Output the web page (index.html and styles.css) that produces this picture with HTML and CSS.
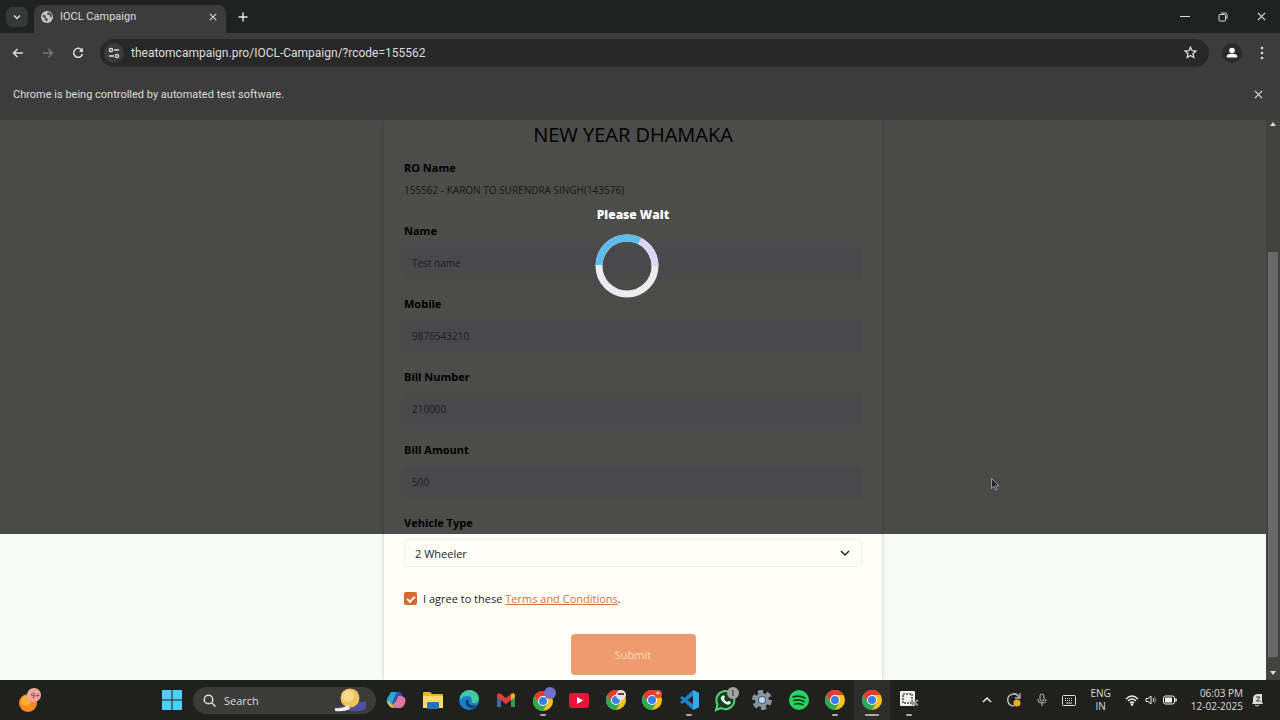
FILE: index.html
```
<!DOCTYPE html>
<html lang="en">
<head>
    <meta charset="utf-8">
    <title>IOCL Campaign</title>
    <meta name="viewport" content="width=device-width, initial-scale=1">
    <link rel="stylesheet" href="styles.css">
</head>
<body>
    <svg class="defs" width="0" height="0" aria-hidden="true">
        <symbol id="chrome" viewBox="0 0 20 20">
            <circle cx="10" cy="10" r="10" fill="#fbc116"/>
            <path d="M1.3 5A10 10 0 0 1 18.7 5H10L5.7 12.5z" fill="#e33b2e"/>
            <path d="M1.3 5A10 10 0 0 0 10 20l4.3-7.5H5.7z" fill="#2da94f"/>
            <circle cx="10" cy="10" r="5" fill="#fff"/>
            <circle cx="10" cy="10" r="4" fill="#3a7de8"/>
        </symbol>
        <symbol id="close" viewBox="0 0 10 10">
            <path d="M1 1l8 8M9 1l-8 8" fill="none" stroke="currentColor" stroke-width="1.3"/>
        </symbol>
    </svg>

    <header>
        <div class="tab-strip">
            <button class="tab-search" aria-label="Search tabs"><svg width="10" height="10" viewBox="0 0 10 10"><path d="M2 3.5l3 3 3-3" fill="none" stroke="#ddd" stroke-width="1.4"/></svg></button>
            <div class="tab">
                <svg width="12" height="12" viewBox="0 0 12 12"><circle cx="6" cy="6" r="6" fill="#c4c6c7"/><path d="M2 3.5l2.5 1L5 7l2 1-1 2.5-2-1.500L3.500 7 1.500 5.500zM6.500 1.500L6 3.500l2.500.5L9.500 6l1.500.5L10.500 3 8.500 1.500z" fill="#4a4c4d"/></svg>
                <span>IOCL Campaign</span>
                <button aria-label="Close tab"><svg width="8" height="8"><use href="#close"/></svg></button>
            </div>
            <button class="new-tab" aria-label="New tab"><svg width="10" height="10" viewBox="0 0 10 10"><path d="M5 .5v9M.5 5h9" stroke="#e8e8e8" stroke-width="1.4"/></svg></button>
            <div class="window-buttons">
                <button aria-label="Minimize"><svg width="10" height="10" viewBox="0 0 10 10"><path d="M0 4.500h10" stroke="#ddd"/></svg></button>
                <button aria-label="Restore"><svg width="10" height="10" viewBox="0 0 10 10" fill="none" stroke="#ddd"><rect x="1" y="2.500" width="6.500" height="6.500" rx="1"/><path d="M3 1h4.500Q9 1 9 2.500V7"/></svg></button>
                <button aria-label="Close window"><svg width="9" height="9"><use href="#close"/></svg></button>
            </div>
        </div>
        <div class="toolbar">
            <button aria-label="Back"><svg width="12" height="12" viewBox="0 0 12 12"><path d="M11 6H2M5.500 2L1.500 6l4 4" fill="none" stroke="#ddd" stroke-width="1.500"/></svg></button>
            <button aria-label="Forward"><svg width="12" height="12" viewBox="0 0 12 12"><path d="M1 6h9M6.500 2l4 4-4 4" fill="none" stroke="#777" stroke-width="1.500"/></svg></button>
            <button aria-label="Reload"><svg width="12" height="12" viewBox="0 0 12 12"><path d="M10 3.500A4.500 4.500 0 1 0 10.500 7" fill="none" stroke="#ddd" stroke-width="1.500"/><path d="M11 .8V5H6.800z" fill="#ddd"/></svg></button>
            <div class="address">
                <button class="site-info" aria-label="Site information"><svg width="12" height="12" viewBox="0 0 12 12" fill="none" stroke="#ddd" stroke-width="1.400"><circle cx="3" cy="3" r="1.600"/><path d="M6 3h5M1 9h5"/><circle cx="9" cy="9" r="1.600"/></svg></button>
                <input type="text" aria-label="Address" value="theatomcampaign.pro/IOCL-Campaign/?rcode=155562">
                <button aria-label="Bookmark"><svg width="13" height="13" viewBox="0 0 13 13"><path d="M6.500 1.200l1.600 3.500 3.800.4L9 7.700l.8 3.800-3.300-2-3.300 2L4 7.700 1.100 5.100l3.800-.4z" fill="none" stroke="#ddd" stroke-width="1.300"/></svg></button>
            </div>
            <button class="profile" aria-label="Profile"><svg width="20" height="20" viewBox="0 0 20 20" fill="#fff"><circle cx="10" cy="10" r="10" fill="#2a2a2a"/><circle cx="10" cy="7.500" r="2.800"/><path d="M4.800 14.500V13q.5-2.200 5.200-2.200t5.200 2.200v1.500z"/></svg></button>
            <button class="menu" aria-label="Menu"><svg width="4" height="14" viewBox="0 0 4 14" fill="#ddd"><circle cx="2" cy="2" r="1.300"/><circle cx="2" cy="7" r="1.300"/><circle cx="2" cy="12" r="1.300"/></svg></button>
        </div>
        <div class="infobar">
            <span>Chrome is being controlled by automated test software.</span>
            <button aria-label="Dismiss"><svg width="9" height="9"><use href="#close"/></svg></button>
        </div>
    </header>

    <div class="viewport">
        <main>
            <form class="card">
                <h1>NEW YEAR DHAMAKA</h1>
                <div class="ro">
                    <strong>RO Name</strong>
                    <p>155562 - KARON TO SURENDRA SINGH(143576)</p>
                </div>
                <div class="field">
                    <label for="name">Name</label>
                    <input type="text" id="name" name="name" value="Test name">
                </div>
                <div class="field">
                    <label for="mobile">Mobile</label>
                    <input type="text" id="mobile" name="mobile" value="9876543210">
                </div>
                <div class="field">
                    <label for="bill_number">Bill Number</label>
                    <input type="text" id="bill_number" name="bill_number" value="210000">
                </div>
                <div class="field">
                    <label for="bill_amount">Bill Amount</label>
                    <input type="text" id="bill_amount" name="bill_amount" value="500">
                </div>
                <div class="field">
                    <label for="vehicle">Vehicle Type</label>
                    <div class="select">
                        <select id="vehicle" name="vehicle">
                            <option>2 Wheeler</option>
                        </select>
                        <svg width="10" height="10" viewBox="0 0 10 10"><path d="M1 3l4 4 4-4" fill="none" stroke="#222" stroke-width="1.500"/></svg>
                    </div>
                </div>
                <div class="agree">
                    <input type="checkbox" id="agree" name="agree" checked>
                    <label for="agree">I agree to these <a href="#terms">Terms and Conditions</a>.</label>
                </div>
                <button class="submit" type="submit">Submit</button>
            </form>
        </main>
        <div class="overlay">
            <p>Please Wait</p>
            <svg class="loader" width="64" height="64" viewBox="0 0 64 64" fill="none" stroke-width="7">
                <circle cx="32" cy="32" r="28" stroke="#ececf0"/>
                <path d="M44.700 7A28 28 0 0 1 60 32" stroke="#dcd6f6"/>
                <path d="M4 31A28 28 0 0 1 44.700 7" stroke="#5cbcec"/>
            </svg>
        </div>
        <div class="scrollbar">
            <svg width="6" height="4" viewBox="0 0 6 4"><path d="M0 4l3-4 3 4z" fill="#ddd"/></svg>
            <div class="track"><div class="thumb"></div></div>
            <svg width="6" height="4" viewBox="0 0 6 4"><path d="M0 0l3 4 3-4z" fill="#ddd"/></svg>
        </div>
        <svg class="pointer" width="9" height="14" viewBox="0 0 9 14"><path d="M.5.500v10l2.400-2.200L4.500 12l1.600-.7-1.600-3.500h3.400z" fill="#20262b" stroke="#9fb2bd" stroke-width=".8"/></svg>
    </div>

    <footer>
        <button class="widgets" aria-label="Widgets">
            <svg width="24" height="26" viewBox="0 0 24 26"><circle cx="10" cy="16" r="9" fill="#f58a1f"/><circle cx="8" cy="14" r="5" fill="#fbae35"/><circle cx="16" cy="8" r="7" fill="#f0a6a0"/></svg>
            <span>9+</span>
        </button>
        <button class="start" aria-label="Start"><svg width="20" height="20" viewBox="0 0 20 20" fill="#4fcdf5"><path d="M0 0h9.500v9.500H0zM10.500 0H20v9.500h-9.500zM0 10.500h9.500V20H0zM10.500 10.500H20V20h-9.500z"/></svg></button>
        <label class="search">
            <svg width="13" height="13" viewBox="0 0 13 13" fill="none" stroke="#ddd" stroke-width="1.500"><circle cx="5.500" cy="5.500" r="4.300"/><path d="M8.700 8.700L12.500 12.500"/></svg>
            <input type="text" placeholder="Search" aria-label="Search">
            <svg width="34" height="24" viewBox="0 0 34 24"><path d="M1 20l13-3 18-4v7q-4 4-14 3z" fill="#5050a5"/><circle cx="16" cy="10" r="9.500" fill="#f0c45b"/><circle cx="14" cy="8" r="6" fill="#f8d987"/><path d="M1 20q8 1 13-3l2 4q-6 3-15 2z" fill="#f2edf2"/></svg>
        </label>
        <nav class="apps">
            <button aria-label="Copilot"><svg width="20" height="20" viewBox="0 0 20 20"><path d="M5 2h7l-5 13H3Q0 14 1 9z" fill="#28a8cf"/><path d="M12 2q4 0 5 5h-6L9 15l-4 2 5-14z" fill="#364fb4"/><path d="M15 6q6 1 4 7-2 6-8 5H7l5-12z" fill="#db78a8"/><path d="M1 10q1 7 6 8l3-7-3 4z" fill="#dfba45"/></svg></button>
            <button aria-label="File Explorer"><svg width="20" height="20" viewBox="0 0 20 20"><path d="M0 3q0-1 1-1h6l2 2h10q1 0 1 1v13H0z" fill="#e6b634"/><path d="M0 6h20v12H0z" fill="#ffdc67"/><path d="M4 13q0-1 1-1h10q1 0 1 1v6H4z" fill="#2372bb"/></svg></button>
            <button aria-label="Edge"><svg width="20" height="20" viewBox="0 0 20 20"><circle cx="10" cy="10" r="10" fill="#1680ce"/><path d="M1 7Q4 0 11 0q8 1 9 8 0 6-6 5-3-1-1-3 0-4-5-4-4 0-7 4z" fill="#43c9a0"/><path d="M7 10q-2 6 5 8 4 0 6-3-3 1-6 0-4-1-2-5z" fill="#16385e"/></svg></button>
            <button aria-label="Gmail"><svg width="18" height="14" viewBox="0 0 18 14"><path d="M0 2v12h4V5z" fill="#4567a6"/><path d="M14 5v9h4V2z" fill="#3a9850"/><path d="M0 2q1-3 4-1l5 4 5-4q3-2 4 1v2l-9 7-9-7z" fill="#da4037"/><path d="M14 1q3-2 4 1v2l-4 3z" fill="#e8b433"/></svg></button>
            <button class="open" aria-label="Chrome, profile 1"><svg width="26" height="26" viewBox="0 0 26 26"><use href="#chrome" x="3" y="4" width="20" height="20"/><circle cx="20" cy="6" r="6" fill="#7170cb"/></svg></button>
            <button aria-label="YouTube"><svg width="20" height="15" viewBox="0 0 20 15"><rect width="20" height="15" rx="3" fill="#ed1237"/><path d="M8 4l6 3.500L8 11z" fill="#fff"/></svg></button>
            <button aria-label="Chrome, profile 2"><svg width="22" height="22" viewBox="0 0 22 22"><use href="#chrome" x="1" y="1" width="20" height="20"/><circle cx="16" cy="6" r="5" fill="#e8e2d8"/><path d="M13 5h6" stroke="#52483f" stroke-width="2"/></svg></button>
            <button aria-label="Chrome, profile 3"><svg width="22" height="22" viewBox="0 0 22 22"><use href="#chrome" x="1" y="1" width="20" height="20"/><circle cx="17" cy="5" r="4" fill="#d94c33"/><circle cx="17" cy="4" r="1.500" fill="#f2c6a0"/></svg></button>
            <button class="open" aria-label="Visual Studio Code"><svg width="20" height="20" viewBox="0 0 20 20"><path d="M14 0l6 3v14l-6 3L1 8l2-2 11 8V6L3 14l-2-2z" fill="#1b80c4"/><path d="M14 0l6 3v14l-6 3z" fill="#37a7eb"/></svg></button>
            <button aria-label="WhatsApp"><svg width="26" height="26" viewBox="0 0 26 26"><path d="M3 23l1.500-5.500A9 9 0 1 1 8 21z" fill="#173d27" stroke="#55d27b" stroke-width="2"/><path d="M9 9q2-2 3 1l-1 2q1 2 3 3l2-1q3 1 1 3-3 2-7-2t-1-6z" fill="#e4f7e8"/><circle cx="20" cy="6" r="6" fill="#a3a3a0"/><path d="M19 4l1-1v6" stroke="#333" fill="none"/></svg></button>
            <button aria-label="Settings"><svg width="20" height="20" viewBox="0 0 20 20"><circle cx="10" cy="10" r="8" fill="none" stroke="#8c949c" stroke-width="4" stroke-dasharray="5 3.380"/><circle cx="10" cy="10" r="5.500" fill="#46617c" stroke="#8c949c" stroke-width="3"/><circle cx="10" cy="10" r="3" fill="#bddaf1"/></svg></button>
            <button aria-label="Spotify"><svg width="20" height="20" viewBox="0 0 20 20"><circle cx="10" cy="10" r="10" fill="#24d561"/><path d="M4 7q6-2 12 1M5 10.500q5-1.500 10 1M6 14q4-1 8 .8" fill="none" stroke="#123b20" stroke-width="1.700" stroke-linecap="round"/></svg></button>
            <button class="open" aria-label="Chrome"><svg width="20" height="20"><use href="#chrome"/></svg></button>
            <button class="open active" aria-label="Chrome, IOCL Campaign"><svg width="20" height="20"><use href="#chrome"/></svg></button>
            <button class="open" aria-label="Snipping Tool"><svg width="20" height="20" viewBox="0 0 20 20"><rect x="1" y="1" width="15" height="15" rx="1" fill="#f0eded"/><rect x="4" y="4" width="9" height="9" fill="none" stroke="#58484b" stroke-width="1.500" stroke-dasharray="2 1"/><path d="M12 12l7 3M13 15l6-5" stroke="#8b949b" stroke-width="2"/></svg></button>
        </nav>
        <div class="tray">
            <button aria-label="Hidden icons"><svg width="10" height="10" viewBox="0 0 10 10"><path d="M1 7l4-4 4 4" fill="none" stroke="#eee" stroke-width="1.500"/></svg></button>
            <button aria-label="Updates"><svg width="16" height="16" viewBox="0 0 16 16"><path d="M13 5A6 6 0 1 0 8 14" fill="none" stroke="#bbb" stroke-width="1.500"/><path d="M14 1v5H9" fill="none" stroke="#bbb" stroke-width="1.300"/><circle cx="11" cy="11" r="3.500" fill="#efaf25"/></svg></button>
            <button aria-label="Microphone"><svg width="12" height="14" viewBox="0 0 12 14" fill="none" stroke="#bbb"><rect x="4" y="1" width="4" height="7" rx="2"/><path d="M2 6v1q0 3 4 3t4-3V6M6 10v3"/></svg></button>
            <button aria-label="Touch keyboard"><svg width="14" height="11" viewBox="0 0 14 11" fill="none" stroke="#ddd"><rect x=".5" y=".5" width="13" height="10" rx="1"/><path d="M3 3.500h8M3 5.500h8" stroke-dasharray="1 1"/><path d="M4 8h6"/></svg></button>
            <button class="language">ENG<br>IN</button>
            <button class="status" aria-label="Network, volume and battery">
                <svg width="14" height="12" viewBox="0 0 14 12" fill="none" stroke="#eee" stroke-width="1.300"><path d="M1 5q6-6 12 0M3 7q4-4 8 0M5 9q2-2 4 0"/><circle cx="7" cy="10.500" r=".7" fill="#eee"/></svg>
                <svg width="12" height="12" viewBox="0 0 12 12" fill="none" stroke="#eee"><path d="M1 4.500h2L6 2v8L3 7.500H1z"/><path d="M8 4q2 2 0 4" /><path d="M9.500 2.500q3 3.500 0 7" stroke="#777"/></svg>
                <svg width="14" height="10" viewBox="0 0 14 10"><rect x=".5" y="1" width="11" height="8" rx="2" fill="none" stroke="#eee"/><rect x="2" y="2.500" width="7" height="5" fill="#eee"/><path d="M13 3.500v3" stroke="#eee" stroke-width="1.500"/></svg>
            </button>
            <button class="clock">06:03 PM<br>12-02-2025</button>
            <button aria-label="Notifications"><svg width="13" height="14" viewBox="0 0 13 14"><path d="M2 9V5q1-4 5-4h4v8l1 2H1z" fill="#ddd"/><path d="M4 12q2 2 4 0" stroke="#ddd" fill="none"/><path d="M5 4h4L5.500 8h4" stroke="#333" fill="none"/></svg></button>
        </div>
    </footer>
</body>
</html>
```

FILE: styles.css
```
* {
    box-sizing: border-box;
}
body {
    margin: 0;
    height: 100vh;
    display: flex;
    flex-direction: column;
    overflow: hidden;
    font-family: "Open Sans", "Noto Sans", sans-serif;
    font-size: 11px;
    color: #ddd;
    background-color: #1f2221;
}
button, input, select {
    font: inherit;
    color: inherit;
    background: none;
    border: 0;
    padding: 0;
    margin: 0;
}
button {
    display: flex;
    align-items: center;
    justify-content: center;
}
svg {
    display: block;
    flex: none;
}
.defs {
    position: absolute;
}
h1, p {
    margin: 0;
}

/* browser bars */
header {
    font-family: Roboto, "Noto Sans", sans-serif;
}
.tab-strip {
    display: flex;
    align-items: center;
    height: 33px;
    padding: 0 0 0 6px;
}
.tab-search {
    width: 22px;
    height: 20px;
    border-radius: 6px;
    background-color: #373838;
}
.tab {
    display: flex;
    align-items: center;
    align-self: flex-end;
    gap: 7px;
    width: 192px;
    height: 28px;
    margin-left: 6px;
    padding: 0 9px 5px 7px;
    border-radius: 8px 8px 0 0;
    background-color: #3c3c3c;
}
.tab span {
    flex: 1;
}
.new-tab {
    width: 34px;
    height: 28px;
}
.window-buttons {
    display: flex;
    margin-left: auto;
}
.window-buttons button {
    width: 38px;
    height: 30px;
}
.toolbar {
    display: flex;
    align-items: center;
    height: 39px;
    padding: 0 3px;
    background-color: #3c3c3c;
}
.toolbar > button {
    width: 30px;
    height: 28px;
}
.address {
    flex: 1;
    display: flex;
    align-items: center;
    gap: 7px;
    height: 28px;
    margin: 0 8px 0 7px;
    padding: 0 12px 0 4px;
    border-radius: 14px;
    background-color: #282828;
}
.address input {
    flex: 1;
    font-size: 12px;
}
.site-info {
    width: 20px;
    height: 20px;
    border-radius: 50%;
    background-color: #3a3a3a;
}
.infobar {
    display: flex;
    align-items: center;
    justify-content: space-between;
    height: 48px;
    padding: 0 17px 3px 13px;
    background-color: #3c3c3c;
}

/* page */
.viewport {
    flex: 1;
    min-height: 0;
    display: flex;
    position: relative;
    background-color: #f7fbf6;
}
main {
    flex: 1;
    overflow: hidden;
    color: #212529;
}
.card {
    max-width: 498px;
    min-height: 100%;
    margin: 0 auto;
    padding: 0 20px 5px;
    background-color: #fffff8;
    box-shadow: 0 0 4px rgba(0, 0, 0, 0.2);
}
h1 {
    font-size: 20px;
    font-weight: 500;
    line-height: 30px;
    text-align: center;
    color: #000;
}
.ro {
    margin: 9px 0 23px;
    line-height: 17px;
}
.ro strong {
    display: block;
    margin-bottom: 6px;
    color: #000;
}
.ro p {
    font-size: 10px;
    color: #555;
}
.field {
    margin-bottom: 16px;
}
.field label {
    display: block;
    margin-bottom: 8px;
    line-height: 17px;
    font-weight: bold;
    color: #000;
}
.field input {
    display: block;
    width: 100%;
    height: 32px;
    padding: 0 8px;
    border-radius: 4px;
    background-color: #f6f6fa;
    font-size: 10px;
    color: #666;
}
.select {
    display: grid;
    align-items: center;
    border: 1px solid #f0f0ee;
    border-radius: 4px;
}
.select select, .select svg {
    grid-area: 1 / 1;
}
.select select {
    appearance: none;
    height: 26px;
    padding: 0 10px;
}
.select svg {
    justify-self: end;
    margin-right: 11px;
    pointer-events: none;
}
.agree {
    display: flex;
    align-items: center;
    gap: 6px;
    height: 18px;
    margin: 22px 0 27px;
}
.agree input {
    appearance: none;
    width: 13px;
    height: 13px;
    border-radius: 2px;
    background-color: #d9682c;
    display: grid;
    place-items: center;
}
.agree input:checked::before {
    content: "";
    width: 6px;
    height: 3px;
    border: solid #fff;
    border-width: 0 0 2px 2px;
    transform: rotate(-45deg);
}
.agree a {
    color: #db7135;
}
.submit {
    width: 125px;
    height: 41px;
    margin: 0 auto;
    border-radius: 4px;
    background-color: #ee9b70;
    color: #fbd9b8;
}
.overlay {
    position: absolute;
    top: 0;
    left: 0;
    right: 14px;
    height: 74%;
    padding-top: 86px;
    display: flex;
    flex-direction: column;
    align-items: center;
    gap: 10px;
    background-color: rgba(0, 0, 0, 0.7);
}
.overlay p {
    font-size: 12px;
    line-height: 18px;
    font-weight: 800;
    color: #fff;
}
.loader {
    margin-right: 12px;
}
.scrollbar {
    display: flex;
    flex-direction: column;
    align-items: center;
    width: 14px;
    padding: 2px 0 5px;
    background-color: #424341;
}
.track {
    flex: 1;
    display: flex;
    align-items: flex-end;
    padding: 5px 0 14px;
}
.thumb {
    width: 10px;
    height: 77%;
    background-color: #686868;
}
.pointer {
    position: absolute;
    left: 991px;
    top: 358px;
}

/* taskbar */
footer {
    display: flex;
    align-items: center;
    height: 40px;
    padding: 0 16px 0 18px;
    background-color: #20211f;
}
.widgets {
    position: relative;
    margin-right: 120px;
}
.widgets span {
    position: absolute;
    top: 2px;
    right: 2px;
    font-size: 8px;
    line-height: 12px;
    color: #7c1818;
}
.search {
    display: flex;
    align-items: center;
    gap: 8px;
    width: 183px;
    height: 27px;
    margin: 0 2px 0 11px;
    padding: 0 8px 0 10px;
    border-radius: 14px;
    background-color: #3b3b3a;
}
.search input {
    flex: 1;
    min-width: 0;
}
.search input::placeholder {
    color: #ddd;
    opacity: 1;
}
.apps {
    display: grid;
    grid-template-columns: repeat(15, 1fr);
    width: 549px;
}
.apps button {
    position: relative;
    height: 40px;
}
.apps .open::after {
    content: "";
    position: absolute;
    bottom: 4px;
    width: 6px;
    height: 2px;
    border-radius: 1px;
    background-color: #aaa;
}
.apps .active {
    background-color: #2d2d2b;
}
.apps .active::after {
    width: 14px;
}
.tray {
    display: flex;
    align-items: center;
    gap: 14px;
    margin-left: auto;
}
.tray button {
    line-height: 13px;
    font-size: 10px;
}
.status {
    gap: 6px;
}
.tray .clock {
    margin-right: -6px;
    text-align: right;
}
```
